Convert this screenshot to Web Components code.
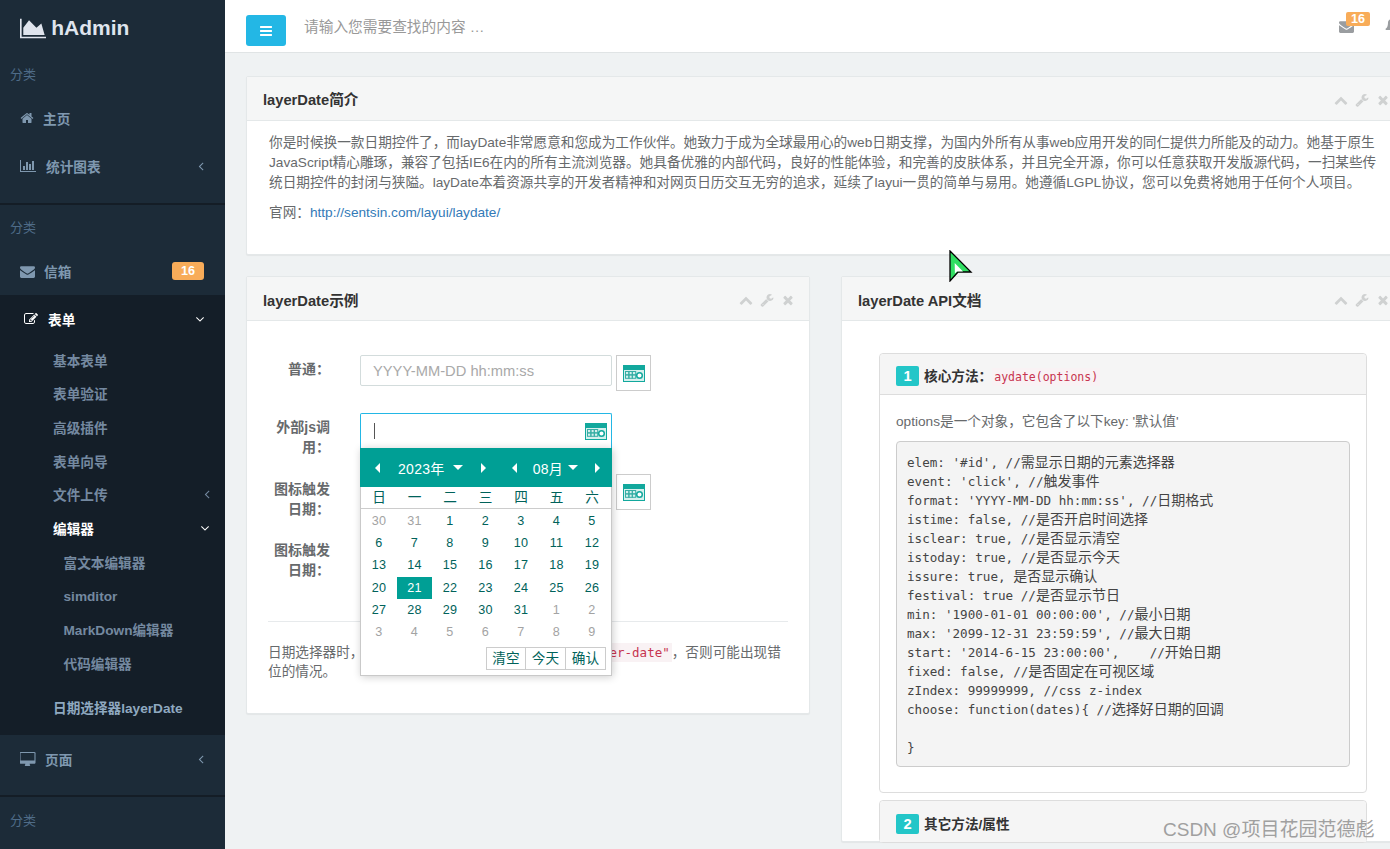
<!DOCTYPE html>
<html><head><meta charset="utf-8">
<style>
html,body{margin:0;height:849px;overflow:hidden;font-family:"Liberation Sans","Noto Sans CJK SC",sans-serif;font-size:13.65px;color:#676a6c;background:#eff2f3}
</style></head><body>
<hadmin-app></hadmin-app>
<script>
const P={
home:[1792,"M1472 992v480q0 26-19 45t-45 19h-384v-384h-256v384h-384q-26 0-45-19t-19-45v-480q0-1 .5-3t.5-3l575-474 575 474q1 2 1 6zm223-69l-62 74q-8 9-21 11h-3q-13 0-21-7l-692-577-692 577q-12 8-24 7-13-2-21-11l-62-74q-8-10-7-23.5t11-21.5l719-599q32-26 76-26t76 26l244 204v-195q0-14 9-23t23-9h192q14 0 23 9t9 23v408l219 182q10 8 11 21.5t-7 23.5z"],
bar:[2048,"M640 896v512h-256v-512h256zm384-512v1024h-256v-1024h256zm1024 1152v128h-2048v-1536h128v1408h1920zm-640-896v768h-256v-768h256zm384-384v1152h-256v-1152h256z"],
mail:[1792,"M1792 710v794q0 66-47 113t-113 47h-1472q-66 0-113-47t-47-113v-794q44 49 101 87 362 246 497 345 57 42 92.5 65.5t94.5 48 110 24.5h2q51 0 110-24.5t94.5-48 92.5-65.5q170-123 498-345 57-39 100-87zm0-294q0 79-49 151t-122 123q-376 261-468 325-10 7-42.5 30.5t-54 38-52 32.5-57.5 27-50 9h-2q-23 0-50-9t-57.5-27-52-32.5-54-38-42.5-30.5q-91-64-262-182.5t-205-142.5q-62-42-117-115.5t-55-136.5q0-78 41.5-130t118.5-52h1472q65 0 112.5 47t47.5 113z"],
edit:[1792,"M888 1184l116-116-152-152-116 116v56h96v96h56zm440-720q-16-16-33 1l-350 350q-17 17-1 33t33-1l350-350q17-17 1-33zm80 594v190q0 119-84.5 203.5t-203.5 84.5h-832q-119 0-203.5-84.5t-84.5-203.5v-832q0-119 84.5-203.5t203.5-84.5h832q63 0 117 25 15 7 18 23 3 17-9 29l-49 49q-14 14-32 8-23-6-45-6h-832q-66 0-113 47t-47 113v832q0 66 47 113t113 47h832q66 0 113-47t47-113v-126q0-13 9-22l64-64q15-15 35-7t20 29zm-96-738l288 288-672 672h-288v-288zm444 132l-92 92-288-288 92-92q28-28 68-28t68 28l152 152q28 28 28 68t-28 68z"],
desktop:[1920,"M1728 992v-832q0-13-9.5-22.5t-22.5-9.5h-1600q-13 0-22.5 9.5t-9.5 22.5v832q0 13 9.5 22.5t22.5 9.5h1600q13 0 22.5-9.5t9.5-22.5zm128-832v1088q0 66-47 113t-113 47h-544q0 37 16 77.5t32 71 16 43.5q0 26-19 45t-45 19h-512q-26 0-45-19t-19-45q0-14 16-44t32-70 16-78h-544q-66 0-113-47t-47-113v-1088q0-66 47-113t113-47h1632q66 0 113 47t47 113z"],
wrench:[1792,"M448 1472q0-26-19-45t-45-19-45 19-19 45 19 45 45 19 45-19 19-45zm644-420l-682 682q-37 37-90 37-52 0-91-37l-106-108q-38-36-38-90 0-53 38-91l681-681q39 98 114.5 173.5t173.5 114.5zm634-435q0 39-23 106-47 134-164.5 217.5t-258.5 83.5q-185 0-316.5-131.5t-131.5-316.5 131.5-316.5 316.5-131.5q58 0 121.5 16.5t107.5 46.5q16 11 16 28t-16 28l-293 169v224l193 107q5-3 79-48.5t135.5-81 70.5-35.5q15 0 23.5 10t8.5 25z"],
times:[1792,"M1490 1322q0 40-28 68l-136 136q-28 28-68 28t-68-28l-294-294-294 294q-28 28-68 28t-68-28l-136-136q-28-28-28-68t28-68l294-294-294-294q-28-28-28-68t28-68l136-136q28-28 68-28t68 28l294 294 294-294q28-28 68-28t68 28l136 136q28 28 28 68t-28 68l-294 294 294 294q28 28 28 68z"],
up:[1792,"M1683 1331l-166 165q-19 19-45 19t-45-19l-531-531-531 531q-19 19-45 19t-45-19l-166-165q-19-19-19-45.5t19-45.5l742-741q19-19 45-19t45 19l742 741q19 19 19 45.5t-19 45.5z"],
left:[1792,"M1203 544q0 13-10 23l-393 393 393 393q10 10 10 23t-10 23l-50 50q-10 10-23 10t-23-10l-466-466q-10-10-10-23t10-23l466-466q10-10 23-10t23 10l50 50q10 10 10 23z"],
down:[1792,"M1395 736q0 13-10 23l-466 466q-10 10-23 10t-23-10l-466-466q-10-10-10-23t10-23l50-50q10-10 23-10t23 10l393 393 393-393q10-10 23-10t23 10l50 50q10 10 10 23z"],
bars:[1792,"M1664 1344v128q0 26-19 45t-45 19h-1408q-26 0-45-19t-19-45v-128q0-26 19-45t45-19h1408q26 0 45 19t19 45zm0-512v128q0 26-19 45t-45 19h-1408q-26 0-45-19t-19-45v-128q0-26 19-45t45-19h1408q26 0 45 19t19 45zm0-512v128q0 26-19 45t-45 19h-1408q-26 0-45-19t-19-45v-128q0-26 19-45t45-19h1408q26 0 45 19t19 45z"],
area:[2048,"M2048 1536v128h-2048v-1536h128v1408h1920zm-384-1024l256 896h-1664v-576l448-576 576 576z"],
bell:[1792,"M912 1696q0-16-16-16-59 0-101.5-42.5t-42.5-101.5q0-16-16-16t-16 16q0 73 51.5 124.5t124.5 51.5q16 0 16-16zm816-288q0 52-38 90t-90 38h-448q0 106-75 181t-181 75-181-75-75-181h-448q-52 0-90-38t-38-90q50-42 91-88t85-119.5 74.5-158.5 50-206 19.5-260q0-152 117-282.5t307-158.5q-8-19-8-39 0-40 28-68t68-28 68 28 28 68q0 20-8 39 190 28 307 158.5t117 282.5q0 139 19.5 260t50 206 74.5 158.5 85 119.5 91 88z"]
};
const z=s=>s.replace(/[\u4e00-\u9fff]+/g,m=>`<span class="z">${m}</span>`);
function def(name,css,html){
  customElements.define(name,class extends HTMLElement{
    connectedCallback(){ if(this.shadowRoot) return;
      const r=this.attachShadow({mode:'open'});
      r.innerHTML='<style>'+css+'</style>'+(typeof html==='function'?html(this):html);
    }
  });
}
def('fa-i',':host{display:inline-flex;flex:none}svg{display:block;fill:currentColor}',h=>{
  const p=P[h.getAttribute('n')],s=+h.getAttribute('s')||14;
  return `<svg width="${s*p[0]/1792}" height="${s}" viewBox="0 0 ${p[0]} 1792"><path d="${p[1]}"/></svg>`;
});
def('cal-glyph',':host{display:inline-flex;flex:none}svg{display:block}','<svg width="22" height="17" viewBox="0 0 22 17"><rect width="22" height="17" fill="#12a89d"/><rect x="1" y="5" width="20" height="11" fill="#d5f0ed"/><g fill="none" stroke="#37aea5" stroke-width="1"><rect x="2.5" y="6.5" width="3.4" height="3.4"/><rect x="5.9" y="6.5" width="3.4" height="3.4"/><rect x="9.3" y="6.5" width="3.4" height="3.4"/><rect x="2.5" y="9.9" width="3.4" height="3.4"/><rect x="5.9" y="9.9" width="3.4" height="3.4"/><rect x="9.3" y="9.9" width="3.4" height="3.4"/></g><circle cx="16.5" cy="10.5" r="2.8" fill="#fff" stroke="#12a89d" stroke-width="1.5"/></svg>');

/* sidebar */
def('side-label',':host{display:flex;align-items:center;padding-left:10px;font-size:13px;color:#4f6c88;height:var(--h,42px)}','<slot></slot>');
def('side-item',`:host{display:flex;align-items:center;height:48px;padding-left:20px;padding-right:17px;font-size:13.65px;font-weight:700;color:#7f98af;box-sizing:border-box}
:host([active]){color:#fff;padding-left:24px}
.g{flex:1;display:flex;align-items:center;min-width:0}
::slotted([slot=end]){flex:none}`,'<slot name="ic"></slot><span class="g"><slot></slot></span><slot name="end"></slot>');
def('sub-item',`:host{display:flex;align-items:center;height:33.65px;padding-left:var(--pl,53px);padding-right:11px;font-size:13.65px;font-weight:700;color:#7489a0;box-sizing:border-box}
:host([active]){color:#fff}
:host([cur]){color:#8fa9c0}
span{flex:1}`,'<span><slot></slot></span><slot name="end"></slot>');
def('side-badge',':host{display:block;background:#f8ac59;color:#fff;font-size:12.6px;font-weight:700;border-radius:3px;padding:0 9px;line-height:18px;margin-right:4px}','<slot></slot>');
def('side-bar',`:host{display:block;flex:none;width:225px;height:849px;background:#1c2b38;overflow:hidden}
.logo{height:52px;display:flex;align-items:center;padding:4px 0 0 20px;gap:5px;color:#dfe4ed;font-size:21px;font-weight:700;box-sizing:border-box}
.grp{padding-bottom:13px;border-bottom:2px solid #141d26}
.dark{background:#141e28;padding-bottom:11px}
.tw{padding-bottom:11px}
.third{--pl:63.5px}`,
`<div class="logo"><fa-i n="area" s="23"></fa-i><span>hAdmin</span></div>
<div class="grp"><side-label>分类</side-label>
<side-item><fa-i slot="ic" n="home" s="14" style="margin-right:9px"></fa-i>主页</side-item>
<side-item><fa-i slot="ic" n="bar" s="14" style="margin-right:10px"></fa-i>统计图表<fa-i slot="end" n="left" s="14"></fa-i></side-item></div>
<side-label>分类</side-label>
<side-item><fa-i slot="ic" n="mail" s="15" style="margin-right:9px"></fa-i>信箱<side-badge slot="end">16</side-badge></side-item>
<div class="dark">
<side-item active><fa-i slot="ic" n="edit" s="14" style="margin-right:10px"></fa-i>表单<fa-i slot="end" n="down" s="14" style="margin-right:1px"></fa-i></side-item>
<div class="tw">
<sub-item>基本表单</sub-item><sub-item>表单验证</sub-item><sub-item>高级插件</sub-item><sub-item>表单向导</sub-item>
<sub-item>文件上传<fa-i slot="end" n="left" s="14"></fa-i></sub-item>
<sub-item active>编辑器<fa-i slot="end" n="down" s="14" style="margin-right:2px"></fa-i></sub-item>
<div class="third"><sub-item>富文本编辑器</sub-item><sub-item style="padding-top:3px">simditor</sub-item><sub-item>MarkDown编辑器</sub-item><sub-item>代码编辑器</sub-item></div>
</div>
<sub-item cur>日期选择器layerDate</sub-item>
</div>
<div class="grp" style="padding-bottom:12px"><side-item><fa-i slot="ic" n="desktop" s="15" style="margin-right:9px"></fa-i>页面<fa-i slot="end" n="left" s="14"></fa-i></side-item></div>
<side-label style="--h:44px">分类</side-label>`);

/* top bar */
def('top-bar',`:host{display:flex;align-items:center;height:53px;box-sizing:border-box;background:#fff;border-bottom:1px solid #e0e4e5;padding:0 0 0 21px;width:1190px}
.btn{width:40px;height:31px;margin-top:9px;border-radius:3px;background:#23b7e5;color:#fff;display:flex;align-items:center;justify-content:center}
.ph{margin-left:18px;font-size:14.7px;color:#999;flex:1;margin-top:-2px}
.m{position:relative;margin-right:31px;color:#9a9da0;display:flex}
.b{position:absolute;left:7px;top:-7px;background:#f8ac59;color:#fff;font-size:12.6px;font-weight:700;line-height:14px;padding:0 5px;border-radius:2px}
.bell{color:#9a9da0;margin-right:16px}`,
`<div class="btn"><fa-i n="bars" s="14"></fa-i></div><div class="ph">请输入您需要查找的内容 …</div>
<div class="m"><fa-i n="mail" s="15"></fa-i><span class="b">16</span></div><div class="bell"><fa-i n="bell" s="14"></fa-i></div>`);

/* card */
def('i-card',`:host{display:block;background:#fff;border:1px solid #e4e8e9;border-radius:2px;box-shadow:0 1px 1px rgba(0,0,0,.05)}
header{height:43px;display:flex;align-items:center;padding:0 14px 0 16px;background:#f5f6f6;border-bottom:1px solid #e4e8e9;color:#333}
h5{flex:1;margin:0;font-size:14.7px;font-weight:700;padding-top:var(--tp,0)}
.t{display:flex;align-items:center;gap:7px;color:#cfd1d1;margin-top:2px}`,
`<header><h5><slot name="title"></slot></h5><div class="t"><fa-i n="up" s="14"></fa-i><fa-i n="wrench" s="14"></fa-i><fa-i n="times" s="14"></fa-i></div></header><slot></slot>`);

/* form */
def('form-row',`:host{display:flex;margin-bottom:var(--mb,15px)}
label{flex:none;width:62px;padding-top:var(--pt,5px);text-align:right;font-size:14px;font-weight:700;line-height:20px;color:#676a6c}
.c{margin-left:30px;display:flex;gap:4px;align-items:flex-start}`,
`<label><slot name="l"></slot></label><div class="c"><slot></slot></div>`);
def('text-box',`:host{display:flex;align-items:center;width:252px;height:31px;box-sizing:border-box;border:1px solid #d3dcdc;border-radius:2px;padding:0 12px;font-size:14.7px;color:#a9a9a9;background:#fff}
:host([focus]){height:35px;border-color:#23b7e5;border-bottom:0;border-radius:2px 2px 0 0;justify-content:space-between;padding:0 4px 0 13px;color:#333}
.car{display:block;width:1px;height:16px;background:#555}`,
h=>h.hasAttribute('focus')?'<i class="car"></i><cal-glyph></cal-glyph>':'<slot></slot>');
def('cal-btn',':host{display:flex;align-items:center;justify-content:center;width:35px;height:36px;box-sizing:border-box;border:1px solid #ccc}','<cal-glyph></cal-glyph>');

/* date popup */
def('date-pop',`:host{position:absolute;left:113px;top:127px;width:252px;height:228px;box-sizing:border-box;background:#fff;border:1px solid #c9c9c9;border-top:0;box-shadow:1px 1px 8px rgba(0,0,0,.2);font-size:12.6px;color:#00625a;display:block;z-index:2}
.h{margin:0 -1px;height:39px;background:#009f95;color:#fff;display:flex;align-items:center;padding:0 0 0 15px;font-size:14px}
.tr{width:0;height:0;border:5px solid transparent;flex:none;display:block}
.l{border-left:0;border-right:5px solid #fff}
.r{border-right:0;border-left:5px solid #fff}
.d{border-bottom:0;border-top:5px solid #fff}
.yr{letter-spacing:.3px}
.wk,.gr{display:grid;grid-template-columns:repeat(7,35.5px);text-align:center;margin-left:.25px}
.wk{height:22px;line-height:21px;border-bottom:1px solid #ccc;font-size:13.65px;box-sizing:border-box}
.gr{padding-top:1px}
.gr span{height:22.2px;line-height:22.2px;letter-spacing:.3px}
.o{color:#a3a3a3}
.s{background:#009f95;color:#fff}
.bt{display:flex;justify-content:flex-end;padding:4px 5px 0 0}
.bt span{width:40px;height:23px;box-sizing:border-box;border:1px solid #ccc;border-left:0;line-height:21px;text-align:center;font-size:13.65px}
.bt span:first-child{border-left:1px solid #ccc}`,
h=>{const d=[30,31,1,2,3,4,5,6,7,8,9,10,11,12,13,14,15,16,17,18,19,20,21,22,23,24,25,26,27,28,29,30,31,1,2,3,4,5,6,7,8,9];
return `<div class="h"><i class="tr l"></i><span class="yr" style="margin-left:18px">2023年</span><i class="tr d" style="margin-left:8px"></i><i class="tr r" style="margin-left:18px"></i><i class="tr l" style="margin-left:26px"></i><span class="yr" style="margin-left:16px">08月</span><i class="tr d" style="margin-left:5px"></i><i class="tr r" style="margin-left:17px"></i></div>
<div class="wk">${['日','一','二','三','四','五','六'].map(x=>`<span>${x}</span>`).join('')}</div>
<div class="gr">${d.map((x,i)=>`<span class="${(i<2||i>=33)?'o':''}${i==22?'s':''}">${x}</span>`).join('')}</div>
<div class="bt"><span>清空</span><span>今天</span><span>确认</span></div>`});

/* panels */
def('doc-panel',`:host{display:block;border:1px solid #ddd;border-radius:4px;background:#fff}
header{height:41px;box-sizing:border-box;display:flex;align-items:center;padding:2px 16px 0;background:#f5f5f5;border-radius:4px 4px 0 0;font-size:13.65px;font-weight:700;color:#333}
:host([open]) header{border-bottom:1px solid #ddd}
.n{width:23px;height:20px;background:#23c6c8;color:#fff;border-radius:2px;text-align:center;line-height:20px;font-size:14.7px;font-weight:700;margin:2px 5px 0 0}
.b{display:block}`,
h=>`<header><span class="n">${h.getAttribute('n')}</span><slot name="title"></slot></header><div class="b"><slot></slot></div>`);

def('water-mark',':host{position:absolute;left:1163px;top:819px;font-size:19px;color:#a0a0a0;white-space:nowrap;line-height:22px;z-index:3}','<slot></slot>');
def('green-cursor',':host{position:absolute;left:949px;top:250px;display:block;z-index:3}svg{display:block}','<svg width="25" height="32" viewBox="0 0 25 32"><path d="M1 1 L22 22 L9 22 L1 31Z" fill="#30de62" stroke="#000" stroke-width="1.3"/><path d="M5.7 13 L14 21.5 L8 21.5 L5.9 23.5Z" fill="#fff"/></svg>');

/* page */
def('hadmin-app',`:host{display:flex;width:1390px;height:849px;overflow:hidden;position:relative}
main{flex:none;width:1165px;height:849px;overflow:hidden;background:#eff2f3}
.content{width:1190px;box-sizing:border-box;padding:23px 0 0 21px;position:relative}
.wide{width:1159px;box-sizing:border-box;margin-bottom:21px}
.grid{display:grid;grid-template-columns:564px 564px;column-gap:31px;--tp:2px}
p{margin:0 0 10px;line-height:20px}
.intro{padding:12px 22px 21px;color:#676a6c}
a{color:#337ab7;text-decoration:none}
.form{padding:34px 21px 31px;position:relative}
hr{border:0;border-top:1px solid #e7eaec;margin:41px 0 21px}
code{font-family:"DejaVu Sans Mono","Noto Sans CJK SC",monospace;color:#c7344f;background:#f9f2f4;font-weight:400;line-height:1}
.c1{font-size:11.5px;padding:2px}
.c2{font-size:12.5px;padding:2px 2px 2px 4px}
.api{padding:32px 37px 0;height:520px;box-sizing:border-box}
.api doc-panel+doc-panel{margin-top:7px}
.pb{padding:18px 16px 25px}
.pb p{line-height:18px;margin:0 0 10px}
pre{margin:0;padding:11px 10px 9px;height:326px;box-sizing:border-box;border:1px solid #ccc;border-radius:4px;background:#f4f4f4;font-family:"DejaVu Sans Mono","Noto Sans CJK SC",monospace;font-size:12.6px;line-height:19px;color:#444;overflow:hidden}
.z{font-size:14px;line-height:1}
.sp{display:inline-block;width:242px}
.tt{font-weight:700}`,
`<side-bar></side-bar>
<main>
<top-bar></top-bar>
<div class="content">
<i-card class="wide"><span slot="title">layerDate简介</span>
<div class="intro"><p>你是时候换一款日期控件了，而layDate非常愿意和您成为工作伙伴。她致力于成为全球最用心的web日期支撑，为国内外所有从事web应用开发的同仁提供力所能及的动力。她基于原生JavaScript精心雕琢，兼容了包括IE6在内的所有主流浏览器。她具备优雅的内部代码，良好的性能体验，和完善的皮肤体系，并且完全开源，你可以任意获取开发版源代码，一扫某些传统日期控件的封闭与狭隘。layDate本着资源共享的开发者精神和对网页日历交互无穷的追求，延续了layui一贯的简单与易用。她遵循LGPL协议，您可以免费将她用于任何个人项目。</p>
<p>官网：<a>http://sentsin.com/layui/laydate/</a></p></div></i-card>
<div class="grid">
<i-card style="height:436px"><span slot="title">layerDate示例</span>
<div class="form">
<form-row style="--mb:22px;--pt:4px"><span slot="l">普通：</span><text-box>YYYY-MM-DD hh:mm:ss</text-box><cal-btn></cal-btn></form-row>
<form-row style="--mb:17px;--pt:4px"><span slot="l">外部js调用：</span><text-box focus></text-box></form-row>
<form-row style="--mb:16px;height:45px"><span slot="l">图标触发日期：</span><text-box></text-box><cal-btn></cal-btn></form-row>
<form-row style="--mb:0;height:45px"><span slot="l">图标触发日期：</span><text-box></text-box></form-row>
<hr>
<div style="line-height:19px">日期选择器时，<span class="sp"></span><code class="c2">er-date"</code>，否则可能出现错位的情况。</div>
<date-pop></date-pop>
</div></i-card>
<i-card><span slot="title">layerDate API文档</span>
<div class="api">
<doc-panel n="1" open><span slot="title" class="tt">核心方法：<code class="c1">aydate(options)</code></span>
<div class="pb"><p>options是一个对象，它包含了以下key: '默认值'</p>
<pre>${z(`elem: '#id', //需显示日期的元素选择器
event: 'click', //触发事件
format: 'YYYY-MM-DD hh:mm:ss', //日期格式
istime: false, //是否开启时间选择
isclear: true, //是否显示清空
istoday: true, //是否显示今天
issure: true, 是否显示确认
festival: true //是否显示节日
min: '1900-01-01 00:00:00', //最小日期
max: '2099-12-31 23:59:59', //最大日期
start: '2014-6-15 23:00:00',    //开始日期
fixed: false, //是否固定在可视区域
zIndex: 99999999, //css z-index
choose: function(dates){ //选择好日期的回调

}`)}</pre></div></doc-panel>
<doc-panel n="2"><span slot="title" class="tt">其它方法/属性</span></doc-panel>
</div></i-card>
</div></div>
</main>
<green-cursor></green-cursor>
<water-mark>CSDN @项目花园范德彪</water-mark>`);
</script>
</body></html>
